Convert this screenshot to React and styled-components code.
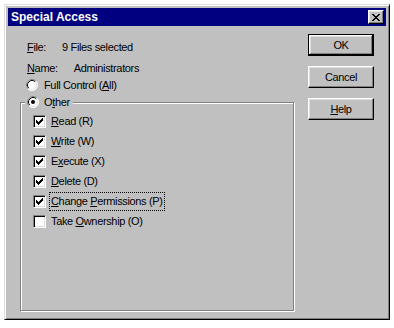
import styled, { createGlobalStyle } from "styled-components"

const Global = createGlobalStyle`
  body {
    margin: 0;
    background: #fff;
    font-family: "Liberation Sans", Arial, sans-serif;
    font-size: 11px;
    letter-spacing: -0.35px;
    color: #000;
  }
`

const Window = styled.div`
  box-sizing: border-box;
  width: 386px;
  height: 316px;
  margin: 4px 0 0 4px;
  padding: 3px;
  background: #c0c0c0;
  border: 1px solid;
  border-color: #dfdfdf #000 #000 #dfdfdf;
  box-shadow: inset 1px 1px #fff, inset -1px -1px #808080;
  display: flex;
  flex-direction: column;
`

const TitleBar = styled.div`
  height: 18px;
  background: #000080;
  display: flex;
  align-items: center;
  justify-content: space-between;
  padding: 0 2px 0 3px;
`

const Title = styled.span`
  color: #fff;
  font-weight: bold;
  font-size: 12px;
  letter-spacing: 0;
`

const CloseButton = styled.div`
  box-sizing: border-box;
  width: 16px;
  height: 14px;
  background: #c0c0c0;
  border: 1px solid;
  border-color: #fff #000 #000 #fff;
  box-shadow: inset -1px -1px #808080, inset 1px 1px #dfdfdf;
  display: flex;
  align-items: center;
  justify-content: center;
`

const Body = styled.div`
  flex: 1;
  display: flex;
  padding: 8px 12px 5px 12px;
`

const Left = styled.div`
  width: 274px;
  display: flex;
  flex-direction: column;
  padding-top: 5px;
`

const InfoRow = styled.div`
  height: 16px;
  line-height: 16px;
  padding-left: 7px;
  margin-bottom: ${p => p.$gap || 0}px;
  display: flex;
`

const InfoValue = styled.span`
  margin-left: 16px;
`

const RadioRow = styled.div`
  height: 16px;
  margin-top: 1px;
  padding-left: 6px;
  display: flex;
  align-items: center;
  gap: 6px;
`

const GroupBox = styled.fieldset`
  flex: 1;
  min-width: 0;
  margin: 2px 0 0 0;
  padding: 0 0 0 4px;
  border: 1px solid #808080;
  box-shadow: inset 1px 1px #fff, 1px 1px #fff;
`

const Legend = styled.legend`
  height: 14px;
  line-height: 14px;
  padding: 0 3px 0 2px;
  background: #c0c0c0;
  display: flex;
  align-items: center;
  gap: 5px;
`

const CheckList = styled.div`
  display: flex;
  flex-direction: column;
  gap: 1px;
  margin: 3px 0 0 8px;
`

const CheckRow = styled.div`
  display: flex;
  align-items: center;
  gap: 3px;
`

const CheckBox = styled.div`
  box-sizing: border-box;
  width: 13px;
  height: 13px;
  background: #fff;
  border: 1px solid;
  border-color: #808080 #fff #fff #808080;
  box-shadow: inset 1px 1px #000, inset -1px -1px #dfdfdf;
  svg { display: block; margin: -1px; }
`

const CheckLabel = styled.span`
  line-height: 15px;
  padding: 1px;
  border: 1px dotted ${p => (p.$focus ? "#000" : "transparent")};
`

const Buttons = styled.div`
  margin-left: auto;
  width: 66px;
  display: flex;
  flex-direction: column;
  gap: 10px;
`

const Button = styled.div`
  box-sizing: border-box;
  height: 22px;
  display: flex;
  align-items: center;
  justify-content: center;
  border: 1px solid;
  border-color: ${p => (p.$default ? "#000" : "#fff #000 #000 #fff")};
  box-shadow: ${p =>
    p.$default
      ? "inset -1px -1px #000, inset 1px 1px #fff, inset -2px -2px #808080, inset 2px 2px #dfdfdf"
      : "inset -1px -1px #808080, inset 1px 1px #dfdfdf"};
`

const Radio = ({ checked }) => (
  <svg width="12" height="12" viewBox="0 0 12 12">
    <circle cx="6" cy="6" r="5.5" fill="#fff" />
    <path d="M2.11 9.89 A5.5 5.5 0 0 1 9.89 2.11" fill="none" stroke="#808080" />
    <path d="M2.82 9.18 A4.5 4.5 0 0 1 9.18 2.82" fill="none" stroke="#000" />
    <path d="M9.89 2.11 A5.5 5.5 0 0 1 2.11 9.89" fill="none" stroke="#fff" />
    <path d="M9.18 2.82 A4.5 4.5 0 0 1 2.82 9.18" fill="none" stroke="#dfdfdf" />
    {checked && <circle cx="6" cy="6" r="2" fill="#000" />}
  </svg>
)

const Check = ({ checked }) => (
  <CheckBox>
    <svg width="13" height="13" viewBox="0 0 13 13" shapeRendering="crispEdges">
      {checked && (
        <path
          d="M9 3h1v1h-1z M8 4h2v1h-2z M3 5h1v1h-1z M7 5h3v1h-3z M3 6h2v1h-2z M6 6h3v1h-3z M3 7h5v1h-5z M4 8h3v1h-3z M5 9h1v1h-1z"
          fill="#000"
        />
      )}
    </svg>
  </CheckBox>
)

const perms = [
  { label: <><u>R</u>ead (R)</>, checked: true },
  { label: <><u>W</u>rite (W)</>, checked: true },
  { label: <>E<u>x</u>ecute (X)</>, checked: true },
  { label: <><u>D</u>elete (D)</>, checked: true },
  { label: <><u>C</u>hange <u>P</u>ermissions (P)</>, checked: true, focus: true },
  { label: <>Take <u>O</u>wnership (O)</>, checked: false },
]

export default function App() {
  return (
    <>
      <Global />
      <Window>
        <TitleBar>
          <Title>Special Access</Title>
          <CloseButton>
            <svg width="8" height="7" viewBox="0 0 8 7" shapeRendering="crispEdges">
              <path
                d="M0 0h2v1h-2z M6 0h2v1h-2z M1 1h2v1h-2z M5 1h2v1h-2z M2 2h4v1h-4z M3 3h2v1h-2z M2 4h4v1h-4z M1 5h2v1h-2z M5 5h2v1h-2z M0 6h2v1h-2z M6 6h2v1h-2z"
                fill="#000"
              />
            </svg>
          </CloseButton>
        </TitleBar>
        <Body>
          <Left>
            <InfoRow $gap={5}>
              <span><u>F</u>ile:</span>
              <InfoValue>9 Files selected</InfoValue>
            </InfoRow>
            <InfoRow>
              <span><u>N</u>ame:</span>
              <InfoValue>Administrators</InfoValue>
            </InfoRow>
            <RadioRow>
              <Radio />
              <span>Full Control (<u>A</u>ll)</span>
            </RadioRow>
            <GroupBox>
              <Legend>
                <Radio checked />
                <span>O<u>t</u>her</span>
              </Legend>
              <CheckList>
                {perms.map((p, i) => (
                  <CheckRow key={i}>
                    <Check checked={p.checked} />
                    <CheckLabel $focus={p.focus}>{p.label}</CheckLabel>
                  </CheckRow>
                ))}
              </CheckList>
            </GroupBox>
          </Left>
          <Buttons>
            <Button $default>OK</Button>
            <Button>Cancel</Button>
            <Button><span><u>H</u>elp</span></Button>
          </Buttons>
        </Body>
      </Window>
    </>
  )
}
